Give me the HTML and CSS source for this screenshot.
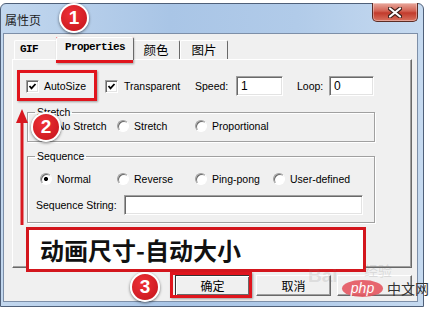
FILE: index.html
```html
<!DOCTYPE html>
<html lang="zh-CN">
<head>
  <meta charset="UTF-8">
  <meta name="viewport" content="width=device-width, initial-scale=1.0">
  <title>属性页</title>
  <link rel="stylesheet" href="styles.css">
</head>
<body>

  <div class="window">
    <div class="titlebar">
      <span class="title">属性页</span>
      <span class="close">
        <svg width="14" height="11" viewBox="0 0 14 11">
          <path d="M2 1.5 L12 9.5 M12 1.5 L2 9.5" stroke="#3b1d18" stroke-width="4.2" stroke-linecap="round"/>
          <path d="M2 1.5 L12 9.5 M12 1.5 L2 9.5" stroke="#fff" stroke-width="2.2" stroke-linecap="round"/>
        </svg>
      </span>
    </div>

    <div class="client">
      <div class="tabs">
        <div class="tab tab-gif">GIF</div>
        <div class="tab tab-active">Properties</div>
        <div class="tab tab-cjk">颜色</div>
        <div class="tab tab-cjk">图片</div>
      </div>

      <div class="panel">
        <div class="row-top">
          <label class="check w-auto"><span class="box checked"></span>AutoSize</label>
          <label class="check w-trans"><span class="box checked"></span>Transparent</label>
          <span class="lbl w-speed">Speed:</span>
          <span class="field w-47">1</span>
          <span class="lbl w-loop">Loop:</span>
          <span class="field w-45">0</span>
        </div>

        <fieldset class="group group-stretch">
          <legend>Stretch</legend>
          <div class="radios">
            <span class="radio"><span class="dot"></span>No Stretch</span>
            <span class="radio"><span class="dot"></span>Stretch</span>
            <span class="radio"><span class="dot"></span>Proportional</span>
          </div>
        </fieldset>

        <fieldset class="group group-seq">
          <legend>Sequence</legend>
          <div class="radios">
            <span class="radio"><span class="dot on"></span>Normal</span>
            <span class="radio"><span class="dot"></span>Reverse</span>
            <span class="radio"><span class="dot"></span>Ping-pong</span>
            <span class="radio"><span class="dot"></span>User-defined</span>
          </div>
          <div class="seq-string">
            <span class="lbl w-seq">Sequence String:</span>
            <span class="field w-239"></span>
          </div>
        </fieldset>
      </div>

      <div class="buttons">
        <button class="btn btn-default">确定</button>
        <button class="btn">取消</button>
        <button class="btn"></button>
      </div>
    </div>
  </div>

  <!-- 标注 -->
  <div class="mark mark-tab"></div>
  <div class="mark mark-check"></div>
  <div class="mark mark-ok"></div>

  <svg class="arrow" width="14" height="116" viewBox="0 0 14 116">
    <rect x="5.5" y="12" width="3" height="104" fill="#d81820"/>
    <polygon points="7,0 1,14 13,14" fill="#d81820"/>
  </svg>

  <div class="caption">动画尺寸-自动大小</div>

  <div class="wm-baidu">Bai</div>
  <div class="wm-jy">经验</div>
  <div class="wm-php"><span class="pill">php</span><span class="wm-text">中文网</span></div>

  <div class="badge badge-1">1</div>
  <div class="badge badge-2">2</div>
  <div class="badge badge-3">3</div>

</body>
</html>
```

FILE: styles.css
```css
body {
  margin: 0;
  width: 441px;
  height: 321px;
  overflow: hidden;
  position: relative;
  background: #fff;
  font-family: "Liberation Sans", Arial, sans-serif;
  font-size: 10.5px;
  color: #000;
}

/* ventana */
.window {
  width: 424px;
  height: 304px;
  margin-top: 3px;
  box-sizing: border-box;
  border: 1px solid #4f6079;
  border-radius: 6px 6px 0 0;
  padding: 0 5px 4px 2px;
  background: linear-gradient(to right, #c2d7ee, #a9c5e6 40%, #b1cbe9 70%, #c6daf0);
  display: flex;
  flex-direction: column;
}

.titlebar {
  height: 29px;
  display: flex;
  justify-content: space-between;
  align-items: flex-start;
  padding-left: 2px;
}

.title {
  margin-top: 9px;
  font-family: "Noto Sans CJK SC", sans-serif;
  font-size: 12px;
  line-height: 14px;
  color: #1e1e1e;
}

.close {
  width: 46px;
  height: 19px;
  margin-top: -1px;
  box-sizing: border-box;
  border: 1px solid #5b2c25;
  border-top: none;
  border-radius: 0 0 5px 5px;
  background: linear-gradient(#e9a99d, #d26152 45%, #c23b2c 55%, #d8725f);
  box-shadow: inset 0 0 0 1px rgba(255, 255, 255, 0.35);
  display: flex;
  justify-content: center;
  align-items: center;
}

.client {
  height: 269px;
  box-sizing: border-box;
  border: 1px solid #7d8fa8;
  background: #f0f0f0;
  padding: 3px 5px 0 8px;
}

/* pestañas */
.tabs {
  height: 22px;
  display: flex;
  align-items: flex-end;
  padding-left: 2px;
}

.tab {
  height: 19px;
  box-sizing: border-box;
  border: 1px solid;
  border-color: #fff #696969 transparent #fff;
  border-bottom: none;
  border-radius: 2px 2px 0 0;
  background: #f0f0f0;
  font-family: "Liberation Mono", monospace;
  font-weight: bold;
  font-size: 11px;
  letter-spacing: -0.6px;
  line-height: 17px;
  text-align: center;
}

.tab-gif {
  width: 44px;
  text-align: left;
  padding-left: 5px;
}

.tab-active {
  width: 78px;
  height: 23px;
  margin: 0 -2px -1px -2px;
  line-height: 18px;
  position: relative;
  z-index: 1;
}

.tab-cjk {
  width: 48px;
  font-family: "Noto Sans CJK SC", sans-serif;
  font-weight: normal;
  font-size: 12.5px;
  letter-spacing: 0;
  line-height: 17px;
}

.panel {
  height: 209px;
  box-sizing: border-box;
  border: 1px solid;
  border-color: #fff #696969 #696969 #fff;
  box-shadow: inset -1px -1px 0 #a0a0a0;
  padding: 16px 0 0 13px;
}

/* controles */
.row-top {
  height: 20px;
  display: flex;
  align-items: center;
}

.check {
  display: flex;
  align-items: center;
  gap: 5px;
}

.w-auto { width: 79px; }
.w-trans { width: 90px; gap: 6px; }
.w-speed { width: 41px; }
.w-loop { width: 32px; margin-left: 14px; }
.w-seq { width: 88px; }

.box {
  width: 13px;
  height: 13px;
  box-sizing: border-box;
  border: 1px solid;
  border-color: #a0a0a0 #fff #fff #a0a0a0;
  box-shadow: inset 1px 1px 0 #696969, inset -1px -1px 0 #e3e3e3;
  background: #fff;
}

.box.checked {
  background: #fff url("data:image/svg+xml;utf8,<svg xmlns='http://www.w3.org/2000/svg' width='11' height='11'><polyline points='2.5,5 4.5,7.3 8.5,3' fill='none' stroke='black' stroke-width='1.8'/></svg>") center / 11px 11px no-repeat;
}

.field {
  height: 20px;
  box-sizing: border-box;
  border: 1px solid;
  border-color: #a0a0a0 #fff #fff #a0a0a0;
  box-shadow: inset 1px 1px 0 #696969, inset -1px -1px 0 #e3e3e3;
  background: #fff;
  padding: 1px 0 0 4px;
  font-size: 12px;
  line-height: 16px;
}

.w-47 { width: 47px; }
.w-45 { width: 45px; }
.w-239 { width: 239px; }

.group {
  margin: 10px 0 0 1px;
  width: 348px;
  box-sizing: border-box;
  border: 1px solid #a0a0a0;
  box-shadow: 1px 1px 0 #fff, inset 1px 1px 0 #fff;
  padding: 0 0 8px 12px;
}

.group legend {
  padding: 0 2px;
  margin-left: -5px;
  line-height: 13px;
}

.group-seq {
  margin-top: 8px;
  padding: 9px 0 7px 12px;
}

.radios {
  height: 14px;
  display: grid;
  grid-template-columns: 77px 78px 78px auto;
  align-items: center;
}

.radio {
  display: flex;
  align-items: center;
  gap: 5px;
}

.dot {
  width: 12px;
  height: 12px;
  box-sizing: border-box;
  border-radius: 50%;
  border: 1px solid;
  border-color: #a0a0a0 #fff #fff #a0a0a0;
  box-shadow: inset 1px 1px 0 #696969;
  background: #fff;
}

.dot.on {
  background: radial-gradient(circle, #000 0 1.8px, #fff 2.3px);
}

.seq-string {
  margin: 9px 0 0 -4px;
  display: flex;
  align-items: center;
}

.buttons {
  margin-top: 7px;
  display: flex;
  justify-content: flex-end;
  gap: 6px;
}

.btn {
  width: 75px;
  height: 21px;
  box-sizing: border-box;
  border: 1px solid;
  border-color: #fff #696969 #696969 #fff;
  box-shadow: inset -1px -1px 0 #a0a0a0;
  background: #f0f0f0;
  padding: 0;
  font-family: "Noto Sans CJK SC", sans-serif;
  font-size: 12px;
  line-height: 17px;
  color: #000;
}

.btn-default {
  border-color: #333;
  box-shadow: inset 1px 1px 0 #fff, inset -1px -1px 0 #696969;
}

/* anotaciones */
.mark {
  position: absolute;
  box-sizing: border-box;
  border: 3px solid #e0151d;
  box-shadow: 1px 1px 2px rgba(0, 0, 0, 0.35);
}

.mark-tab { left: 56px; top: 37px; width: 77px; height: 26px; }
.mark-check { left: 17px; top: 70px; width: 80px; height: 31px; }
.mark-ok { left: 170px; top: 272px; width: 82px; height: 26px; }

.arrow {
  position: absolute;
  left: 15px;
  top: 109px;
}

.caption {
  position: absolute;
  left: 26px;
  top: 227px;
  width: 340px;
  height: 45px;
  box-sizing: border-box;
  border: 3px solid #d3161d;
  background: #fff;
  padding-left: 11px;
  display: flex;
  align-items: center;
  font-family: "Noto Sans CJK SC", sans-serif;
  font-weight: bold;
  font-size: 24px;
  line-height: 1;
  color: #111;
}

.badge {
  position: absolute;
  width: 30px;
  height: 30px;
  box-sizing: border-box;
  border: 2px solid #fff;
  border-radius: 50%;
  background: radial-gradient(circle at 40% 35%, #ee3036, #c3141b);
  box-shadow: 0 1px 3px rgba(0, 0, 0, 0.55);
  color: #fff;
  font-weight: bold;
  font-size: 19px;
  display: flex;
  justify-content: center;
  align-items: center;
}

.badge-1 { left: 59px; top: 3px; }
.badge-2 { left: 31px; top: 112px; }
.badge-3 { left: 130px; top: 272px; }

.wm-baidu {
  position: absolute;
  left: 308px;
  top: 266px;
  font-size: 19px;
  line-height: 20px;
  font-weight: bold;
  color: rgba(120, 120, 120, 0.18);
}

.wm-jy {
  position: absolute;
  left: 364px;
  top: 262px;
  font-family: "Noto Sans CJK SC", sans-serif;
  font-size: 14px;
  line-height: 16px;
  color: rgba(120, 120, 120, 0.2);
}

.wm-php {
  position: absolute;
  left: 342px;
  top: 280px;
  display: flex;
  align-items: center;
  gap: 4px;
}

.pill {
  width: 41px;
  height: 17px;
  border-radius: 50%;
  background: rgba(228, 86, 96, 0.9);
  color: #fff;
  font-style: italic;
  font-size: 14px;
  line-height: 16px;
  text-align: center;
}

.wm-text {
  font-family: "Noto Sans CJK SC", sans-serif;
  font-size: 14px;
  line-height: 17px;
  color: #333;
}
```
